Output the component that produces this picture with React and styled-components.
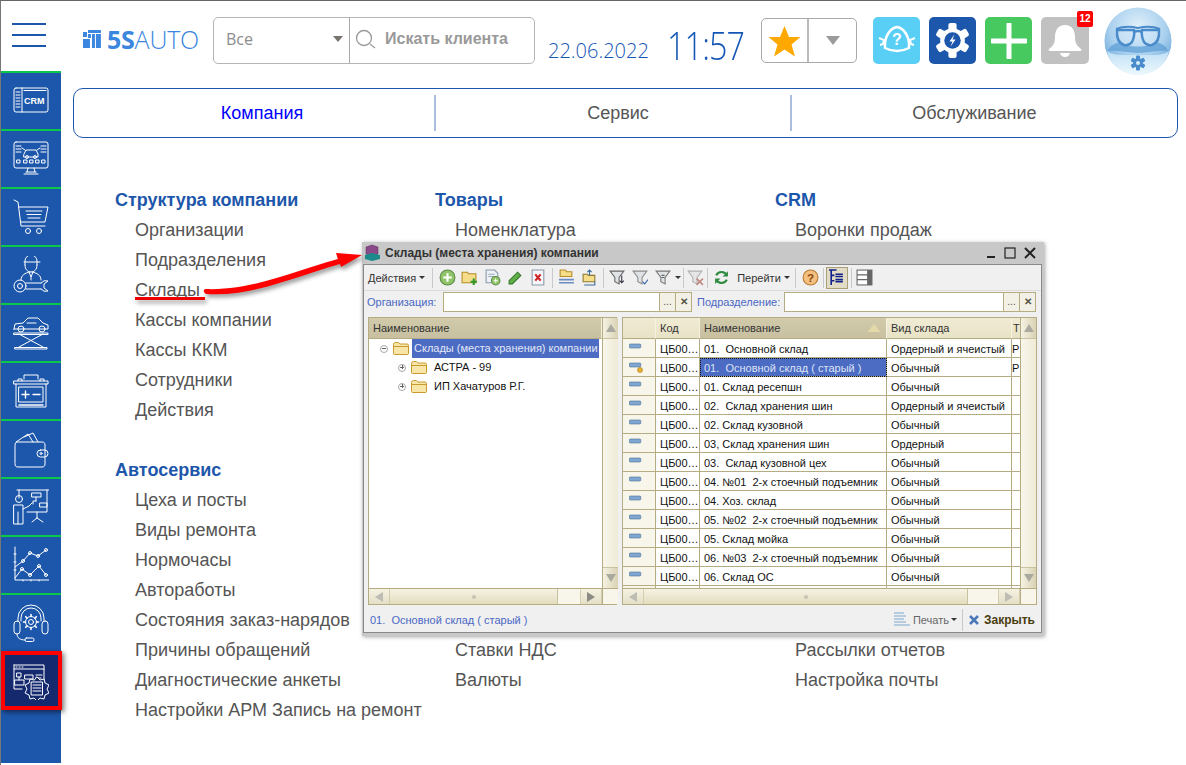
import React from 'react';
import styled, { createGlobalStyle } from 'styled-components';

const GlobalStyle = createGlobalStyle`
  html, body {
    margin: 0;
    padding: 0;
    background: #fff;
    font-family: "Liberation Sans", Arial, sans-serif;
  }
  * { box-sizing: border-box; }
`;

const BLUE = '#1d57ab';

const Page = styled.div`
  position: relative;
  width: 1186px;
  height: 765px;
  overflow: hidden;
  background: #fff;
  border-top: 1px solid #666;
  border-left: 1px solid #777;
`;

const Header = styled.header`
  display: flex;
  align-items: flex-start;
  height: 70px;
`;

const Burger = styled.div`
  display: flex;
  flex-direction: column;
  gap: 9px;
  width: 34px;
  margin: 22px 0 0 11px;
  span {
    display: block;
    height: 2px;
    background: ${BLUE};
  }
`;

const Logo = styled.div`
  display: flex;
  align-items: center;
  gap: 6px;
  margin: 26px 0 0 37px;
  width: 116px;
  height: 24px;
  font-size: 25px;
  line-height: 24px;
  letter-spacing: -0.2px;
  color: #3b86de;
  font-family: "Open Sans", "Liberation Sans", sans-serif;
  font-weight: 300;
  b { font-weight: 700; }
`;

const SearchBox = styled.div`
  display: flex;
  width: 322px;
  height: 47px;
  margin: 16px 0 0 14px;
  border: 1px solid #b5b5b5;
  border-radius: 5px;
`;

const ScopeSelect = styled.div`
  display: flex;
  align-items: center;
  justify-content: space-between;
  width: 136px;
  padding: 0 6px 3px 12px;
  border-right: 1px solid #aaa;
  font-family: "Open Sans", sans-serif;
  font-size: 16px;
  color: #8c8c8c;
`;

const Triangle = styled.i`
  display: block;
  width: 0;
  height: 0;
  border-left: ${p => p.$w || 6}px solid transparent;
  border-right: ${p => p.$w || 6}px solid transparent;
  border-top: ${p => p.$h || 7}px solid ${p => p.$c || '#77736d'};
`;

const SearchField = styled.div`
  display: flex;
  align-items: center;
  gap: 9px;
  padding: 0 0 3px 5px;
  font-size: 16px;
  font-weight: 700;
  color: #999;
`;

const DateText = styled.div`
  margin: 40px 0 0 13px;
  width: 119px;
  font-family: "Open Sans", sans-serif;
  font-weight: 300;
  font-size: 20px;
  line-height: 20px;
  color: #1456b5;
`;

const TimeText = styled.div`
  width: 94px;
  margin-top: 22px;
  font-family: "Open Sans", sans-serif;
  font-weight: 300;
  font-size: 38px;
  line-height: 44px;
  letter-spacing: -1px;
  color: #1456b5;
  transform: scaleX(.85);
  transform-origin: left center;
`;

const FavBox = styled.div`
  display: flex;
  width: 96px;
  height: 45px;
  margin-top: 17px;
  border: 1px solid #aaa;
  border-radius: 5px;
`;

const FavStar = styled.div`
  display: flex;
  align-items: center;
  justify-content: center;
  width: 47px;
  border-right: 2px solid #bbb;
`;

const FavArrow = styled.div`
  flex: 1;
  display: flex;
  align-items: center;
  justify-content: center;
`;

const ActionGroup = styled.div`
  display: flex;
  gap: 9px;
  margin: 16px 0 0 16px;
`;

const ActionButton = styled.div`
  position: relative;
  display: flex;
  align-items: center;
  justify-content: center;
  width: ${p => p.$w || 47}px;
  height: 47px;
  border-radius: 5px;
  background: ${p => p.$bg};
`;

const Badge = styled.span`
  position: absolute;
  top: -6px;
  right: -4px;
  width: 16px;
  height: 16px;
  border-radius: 2px;
  background: #f00;
  color: #fff;
  font-size: 10px;
  font-weight: 700;
  line-height: 16px;
  text-align: center;
`;

const Avatar = styled.div`
  width: 68px;
  height: 68px;
  margin: 6px 0 0 15px;
`;

const Body = styled.div`
  display: flex;
  height: 692px;
`;

const Sidebar = styled.nav`
  width: 60px;
  background: ${BLUE};
`;

const SideItem = styled.div`
  display: flex;
  align-items: center;
  justify-content: center;
  height: 58px;
  border-top: 2px solid #0bc74a;
  padding-right: 1px;
  ${p => p.$active && `
    position: relative;
    width: 61px;
    height: 59px;
    border: 4px solid #f00;
    background: #14296e;
    box-shadow: 2px 2px 5px rgba(0, 0, 0, .55);
  `}
`;

const Main = styled.main`
  flex: 1;
  padding-left: 12px;
`;

const Tabs = styled.div`
  display: flex;
  align-items: center;
  width: 1105px;
  height: 50px;
  margin-top: 17px;
  border: 1px solid ${BLUE};
  border-radius: 10px;
`;

const Tab = styled.div`
  width: ${p => p.$w}px;
  height: 36px;
  padding-left: ${p => p.$pl || 0}px;
  padding-right: ${p => p.$pr || 0}px;
  line-height: 36px;
  text-align: center;
  font-size: 18px;
  color: ${p => (p.$active ? '#0000ff' : '#555')};
  border-right: ${p => (p.$last ? 'none' : '2px solid #a9bfdc')};
`;

const Columns = styled.div`
  display: grid;
  grid-template-columns: 320px 340px 1fr;
  margin: 47px 0 0 42px;
`;

const Heading = styled.div`
  height: 30px;
  line-height: 30px;
  font-size: 18px;
  font-weight: 700;
  color: ${BLUE};
`;

const MenuLink = styled.div`
  height: 30px;
  line-height: 30px;
  padding-left: 20px;
  font-size: 18px;
  color: #555;
  white-space: nowrap;
`;

const Group = styled.section`
  margin-bottom: ${p => p.$gap || 0}px;
`;

const Window = styled.div`
  position: absolute;
  left: 361px;
  top: 241px;
  width: 682px;
  height: 394px;
  padding: 0 2px 3px 1px;
  background: #c8c8c8;
  box-shadow: 1px 1px 4px rgba(0, 0, 0, .35);
  font-family: "Liberation Sans", Arial, sans-serif;
  font-size: 11px;
  color: #111;
`;

const TitleBar = styled.div`
  display: flex;
  align-items: center;
  height: 22px;
  padding: 0 6px 0 1px;
  font-size: 12px;
  font-weight: 700;
  color: #333;
`;

const TitleText = styled.span`
  flex: 1;
  margin-left: 4px;
`;

const WinButtons = styled.div`
  display: flex;
  align-items: center;
  gap: 8px;
`;

const WinInner = styled.div`
  display: flex;
  flex-direction: column;
  height: 369px;
  background: #f0f0f0;
  border: 1px solid #8a8a8a;
`;

const Toolbar = styled.div`
  display: flex;
  align-items: center;
  height: 26px;
  padding-left: 4px;
  border-bottom: 1px solid #dcdcdc;
  color: #333;
`;

const ToolMenu = styled.span`
  display: flex;
  align-items: center;
  gap: 3px;
  margin-right: ${p => p.$mr || 0}px;
  margin-left: ${p => p.$ml || 0}px;
`;

const ToolSep = styled.i`
  display: block;
  width: 1px;
  height: 20px;
  margin: 0 ${p => p.$m || 4}px;
  background: #c9c9c9;
`;

const ToolIcon = styled.span`
  display: flex;
  align-items: center;
  justify-content: center;
  width: ${p => p.$w || 23}px;
  height: 22px;
  ${p => p.$active && 'background: #e2dcc6; border: 1px solid #a89f78;'}
`;

const FilterRow = styled.div`
  display: flex;
  align-items: center;
  height: 26px;
  padding: 0 0 4px 3px;
`;

const FilterLabel = styled.span`
  width: ${p => p.$w}px;
  color: #4a68c4;
  white-space: nowrap;
`;

const FilterInput = styled.div`
  width: ${p => p.$w}px;
  height: 20px;
  background: #fff;
  border: 1px solid #b5ac84;
`;

const FilterBtn = styled.div`
  width: 16px;
  height: 20px;
  margin-right: ${p => p.$mr || 0}px;
  border: 1px solid #b5ac84;
  border-left: none;
  background: #f3f1e6;
  text-align: center;
  font-size: 10px;
  line-height: 18px;
  font-weight: ${p => (p.$bold ? 700 : 400)};
  color: #554;
`;

const Panes = styled.div`
  display: flex;
  gap: 5px;
  padding-left: 4px;
  height: 288px;
`;

const Pane = styled.div`
  display: grid;
  grid-template-columns: 1fr 16px;
  grid-template-rows: 1fr 16px;
  width: ${p => p.$w}px;
  border: 1px solid #b5ac84;
  background: #fff;
`;

const PaneBody = styled.div`
  overflow: hidden;
  min-width: 0;
`;

const VScroll = styled.div`
  display: flex;
  flex-direction: column;
  justify-content: space-between;
  background: #f8f6ea;
  border-left: 1px solid #b5ac84;
`;

const ScrollBtn = styled.div`
  display: flex;
  align-items: center;
  justify-content: center;
  height: ${p => p.$h || 21}px;
  background: linear-gradient(90deg, #f5f2e2, #d9d2b4);
  border-${p => p.$side}: 1px solid #c9c2a0;
`;

const ThumbDot = styled.div`
  flex: 1;
  background: linear-gradient(90deg, #f8f6ea, #efebd8);
`;

const HScroll = styled.div`
  display: flex;
  background: #f8f6ea;
  border-top: 1px solid #b5ac84;
`;

const HArrow = styled.div`
  display: flex;
  align-items: center;
  justify-content: center;
  width: ${p => p.$w || 21}px;
  background: ${p => p.$plain ? 'transparent' : 'linear-gradient(180deg, #f5f2e2, #e4dfc6)'};
  border-right: 1px solid #d4cdae;
`;

const HThumb = styled.div`
  width: ${p => p.$w}px;
  display: flex;
  align-items: center;
  justify-content: center;
  background: linear-gradient(180deg, #f6f3e4, #e3dcbd);
  border-right: 1px solid #c9c2a0;
  &::after {
    content: '';
    width: 4px;
    height: 4px;
    border-radius: 50%;
    background: #c5c2b4;
  }
`;

const Corner = styled.div`
  border-top: 1px solid #b5ac84;
  border-left: 1px solid #b5ac84;
  background: #f8f6ea;
`;

const HeaderCell = styled.div`
  height: 21px;
  line-height: 20px;
  padding-left: ${p => p.$pl ?? 4}px;
  color: #333;
  white-space: nowrap;
  overflow: hidden;
  display: flex;
  align-items: center;
  justify-content: space-between;
  border-right: 1px solid #f6f2df;
  border-bottom: 1px solid #b5ac84;
  background: ${p => (p.$dark
    ? 'linear-gradient(180deg, #d2cbab, #c8c0a0)'
    : 'linear-gradient(180deg, #f0ebd4, #e8e2c6)')};
`;

const TreeRow = styled.div`
  display: flex;
  align-items: center;
  height: 19px;
  padding-left: ${p => p.$indent}px;
`;

const TreeToggle = styled.span`
  position: relative;
  display: block;
  width: 8px;
  height: 8px;
  margin-right: 5px;
  border: 1px solid #a8a8a8;
  border-radius: 50%;
  &::before {
    content: '';
    position: absolute;
    left: 1px;
    top: 2px;
    width: 4px;
    height: 1px;
    background: #666;
  }
  ${p => p.$plus && `&::after {
    content: '';
    position: absolute;
    left: 2.5px;
    top: 0.5px;
    width: 1px;
    height: 4px;
    background: #666;
  }`}
`;

const TreeLabel = styled.span`
  margin-left: ${p => p.$ml}px;
  height: 19px;
  line-height: 19px;
  white-space: nowrap;
  padding: 0 2px;
  ${p => p.$selected && 'background: #4c6cc4; color: #e3e8f6; width: 187px;'}
`;

const TableGrid = styled.div`
  display: grid;
  grid-template-columns: 33px 44px 187px 125px 9px;
  grid-template-rows: 21px;
  grid-auto-rows: 19px;
`;

const Cell = styled.div`
  height: 19px;
  line-height: 20px;
  padding-left: ${p => p.$pl ?? 4}px;
  border-right: 1px solid #b5ac84;
  border-bottom: 1px solid #b5ac84;
  white-space: pre;
  overflow: hidden;
  ${p => p.$selected && `
    background: #4c6cc4;
    color: #dde3f4;
    outline: 1px dotted #111;
    outline-offset: -1px;
  `}
`;

const MarkCell = styled(Cell)`
  display: flex;
  align-items: center;
  padding: 0 0 0 6px;
  background: #f8f6ea;
`;

const StatusBar = styled.div`
  flex: 1;
  display: flex;
  align-items: center;
  padding: 2px 6px 0 6px;
  color: #4a68c4;
`;

const StatusText = styled.span`
  flex: 1;
  white-space: pre;
`;

const PrintBtn = styled.span`
  display: flex;
  align-items: center;
  gap: 2px;
  color: #666;
  padding-right: 5px;
  margin-right: 5px;
  border-right: 1px solid #c9c9c9;
  height: 22px;
`;

const CloseBtn = styled.span`
  display: flex;
  align-items: center;
  gap: 4px;
  font-size: 12px;
  font-weight: 700;
  color: #4a3d10;
`;

const ArrowOverlay = styled.svg`
  position: absolute;
  left: 0;
  top: 0;
  width: 1186px;
  height: 765px;
  pointer-events: none;
  filter: drop-shadow(2px 3px 2px rgba(0, 0, 0, .4));
`;

const strokeProps = { fill: 'none', stroke: '#fff', strokeWidth: 1, strokeLinejoin: 'round', strokeLinecap: 'round' };

const SideIcon = ({ children }) => (
  <svg width="36" height="38" viewBox="0 0 36 38" {...strokeProps}>{children}</svg>
);

const sideIcons = [
  <SideIcon key="crm">
    <g transform="translate(0 4)">
      <rect x="1" y="2" width="34" height="24" rx="2" />
      <path d="M9 2v24M3 6h4M3 9h4M3 12h4M3 15h4M3 18h4M3 21h4M11 4.500h22" />
      <text x="11" y="18" fill="#fff" stroke="none" fontSize="9" fontFamily="Liberation Sans" fontWeight="700">CRM</text>
    </g>
  </SideIcon>,
  <SideIcon key="diag">
    <rect x="1" y="2" width="34" height="26" rx="2" />
    <path d="M13 32h10M11 34h14M15 28l-1 4M21 28l1 4M3 6h5M3 9h5M3 12h5M28 6h5M28 9h5M28 12h5" />
    <path d="M11 14l2-4h10l2 4v3H11zM9 8l3 2M27 8l-3 2" />
    <circle cx="14" cy="17" r="1.500" /><circle cx="22" cy="17" r="1.500" />
    <path d="M4 20h3v3H4zM11 20h3v3h-3zM17 20h3v3h-3zM23 20h3v3h-3zM29 20h3v3h-3z" />
  </SideIcon>,
  <SideIcon key="cart">
    <path d="M1 2l4 2 3 24h24" />
    <path d="M6 9h29l-3 15H8" />
    <path d="M13 13h16M14 16.500h14M15 20h12" />
    <circle cx="15" cy="33" r="2.500" /><circle cx="26" cy="33" r="2.500" />
  </SideIcon>,
  <SideIcon key="mech">
    <path d="M12 9V5a6 6 0 0 1 12 0v4M11 6h16M12 9c0 5 3 7 6 7s6-2 6-7" />
    <path d="M8 24c0-5 4-7 9-8M28 24c0-5-4-7-9-8M16 16l2 5 2-5M18 21v3" />
    <circle cx="7" cy="30" r="6" /><circle cx="7" cy="30" r="2.500" />
    <path d="M13 27h15M13 33h15M28 27a6 6 0 0 1 7-2l-4 3v4l4 3a6 6 0 0 1-7-2" />
  </SideIcon>,
  <SideIcon key="lift">
    <path d="M1 15l1-5 8-1 5-5h10l5 5 5 2v4H1z" />
    <circle cx="8" cy="15" r="3" /><circle cx="29" cy="15" r="3" />
    <path d="M14 9h9M1 19h34v1.500H1zM2 35h32v-1.500H2zM6 20l24 13M30 20L6 33" />
  </SideIcon>,
  <SideIcon key="bat">
    <path d="M1 9h34v3H1zM3 12v23h30V12M5 9V7h4v2M27 9V7h4v2M11 7V3h14v4" />
    <rect x="6" y="15" width="24" height="15" />
    <path d="M9 22.500h7M12.500 19v7M20 22.500h7M6 33h24" strokeWidth="1.400" />
  </SideIcon>,
  <SideIcon key="wallet">
    <path d="M2 15c0-2 1-3 3-3h24c2 0 3 1 3 3v19c0 2-1 3-3 3H5c-2 0-3-1-3-3z" />
    <path d="M3 12l12-8 5 8M11 7l9-4 5 9" />
    <rect x="24" y="20" width="11" height="7" rx="3.500" /><circle cx="28" cy="23.500" r="1" />
  </SideIcon>,
  <SideIcon key="board">
    <path d="M4 2h32M6 2v8M34 2v22H14" />
    <path d="M19 5h9v4h-9zM23 9v4M23 13h-3v3M27 15h7v4h-7zM24 24v6M24 30l-5 4M24 30l6 4" />
    <circle cx="6" cy="11" r="3.500" />
    <path d="M1 17h9v19H1zM5 24v12M10 21l6-3 3-3" />
  </SideIcon>,
  <SideIcon key="chart">
    <path d="M2 1v33h34M1 8h2M1 16h2M1 24h2M10 35v-1M18 35v-1M26 35v-1" />
    <path d="M2 21l8-6 7-8 8 3 8-6M2 32l7-9 8 6 9-9 7 9" />
    <circle cx="10" cy="15" r="1.500" /><circle cx="17" cy="7" r="1.500" /><circle cx="25" cy="10" r="1.500" /><circle cx="33" cy="4" r="1.500" />
    <circle cx="9" cy="23" r="1.500" /><circle cx="17" cy="29" r="1.500" /><circle cx="26" cy="20" r="1.500" /><circle cx="33" cy="29" r="1.500" />
  </SideIcon>,
  <SideIcon key="head">
    <path d="M5 17v-3a13 13 0 0 1 26 0v3M8 17v-3a10 10 0 0 1 20 0v3" />
    <rect x="1" y="17" width="6" height="13" rx="3" /><rect x="29" y="17" width="6" height="13" rx="3" />
    <path d="M4 30c0 4 3 6 8 6" /><rect x="12" y="34" width="9" height="3.500" rx="1.500" />
    <circle cx="18" cy="18" r="2.500" />
    <circle cx="18" cy="18" r="5.500" />
    <path d="M18 10.500v2M18 23.500v2M10.500 18h2M23.500 18h2M12.700 12.700l1.400 1.400M21.900 21.900l1.400 1.400M12.700 23.300l1.400-1.400M21.900 14.100l1.400-1.400" strokeWidth="1.600" />
  </SideIcon>,
  <SideIcon key="cfg">
    <path d="M1 3h30v24H15M1 3v24h8M1 7h30M3 5h1M6 5h1M9 5h1M4 11h4v4H4zM6 15v3M2 18h9v5H2zM12 13h8v4h-8zM23 13h6M23 16h5" />
    <path d="M24 15l3 3 4-1 1 4 4 2-2 4 2 4-4 2-1 4-4-1-3 3-3-3-4 1-1-4-4-2 2-4-2-4 4-2 1-4 4 1z" fill="#14296e" />
    <rect x="18.500" y="20" width="11" height="13" /><path d="M20 23h8M20 26h8M20 29h8" />
  </SideIcon>,
];

const Folder = () => (
  <svg width="16" height="13" viewBox="0 0 16 13">
    <path d="M.5 2.500q0-2 2-2h3l1.500 1.500h7q1.500 0 1.500 1.500v8q0 1-1 1h-13q-1 0-1-1z" fill="#f8e6a8" stroke="#c89a2e" />
    <path d="M.5 4.500h15" stroke="#c89a2e" />
  </svg>
);

const Mark = ({ dot }) => (
  <svg width="14" height="12" viewBox="0 0 14 12">
    <rect x=".3" y="2" width="11.500" height="4" rx="1" fill="#7fa7cf" stroke="#4a6f9a" strokeWidth=".6" />
    {dot && <circle cx="11" cy="9" r="2.500" fill="#e8b030" stroke="#a57a10" strokeWidth=".6" />}
  </svg>
);

const ti = { width: 17, height: 17, viewBox: '0 0 16 16' };
const FolderTool = ({ children }) => (
  <svg {...ti}>
    <path d="M1 3h5l1 1.500h7V13H1z" fill="#f6dd8a" stroke="#b58a24" />
    {children}
  </svg>
);
const FilterTool = ({ color = '#8a8a8a', children }) => (
  <svg {...ti}>
    <path d="M1 2h13L9.500 8v6l-4-2V8z" fill="#dfe3e6" stroke={color} />
    {children}
  </svg>
);

const Tools = () => (
  <Toolbar>
    <ToolMenu $mr={4}>Действия <Triangle $w={3} $h={3} $c="#333" /></ToolMenu>
    <ToolSep $m={3} />
    <ToolIcon $w={22}>
      <svg {...ti}><circle cx="8" cy="8" r="7" fill="#8fc46a" stroke="#5b8a45" /><path d="M8 4v8M4 8h8" stroke="#fff" strokeWidth="2" /></svg>
    </ToolIcon>
    <ToolIcon><FolderTool><path d="M12 9v6M9 12h6" stroke="#2e9a2e" strokeWidth="2" /></FolderTool></ToolIcon>
    <ToolIcon>
      <svg {...ti}><path d="M2 1h8l3 3v9H2z" fill="#eef2f6" stroke="#8a98a8" /><path d="M4 5h6M4 7h6" stroke="#9ab" /><circle cx="11" cy="11" r="4" fill="#8fc46a" stroke="#5b8a45" /><path d="M11 9v4M9 11h4" stroke="#fff" /></svg>
    </ToolIcon>
    <ToolIcon>
      <svg {...ti}><path d="M2 11l8-8 3 3-8 8H2z" fill="#62b04a" stroke="#35782a" /></svg>
    </ToolIcon>
    <ToolIcon>
      <svg {...ti}><path d="M2 1h11v14H2z" fill="#f6f8fb" stroke="#8a98a8" /><path d="M5 5l5 6M10 5l-5 6" stroke="#d02020" strokeWidth="2" /></svg>
    </ToolIcon>
    <ToolSep $m={2} />
    <ToolIcon>
      <svg {...ti}><path d="M2 1h5l1 1.500h5V7H2z" fill="#f6dd8a" stroke="#b58a24" /><path d="M1 10h14M1 13h14" stroke="#6b8cc0" strokeWidth="1.500" /></svg>
    </ToolIcon>
    <ToolIcon>
      <svg {...ti}><path d="M2 5h4l1 1h6v6H2z" fill="#f6dd8a" stroke="#8a7a30" /><path d="M8 1v5M6 3l2-2 2 2M13 12v3H3" fill="none" stroke="#3a6a9a" /></svg>
    </ToolIcon>
    <ToolSep $m={2} />
    <ToolIcon><FilterTool color="#666"><path d="M12 6v7M10 11l2 2 2-2" stroke="#334" fill="none" /></FilterTool></ToolIcon>
    <ToolIcon><FilterTool><path d="M10 12l2 2 3-4" stroke="#3a6ab0" fill="none" /></FilterTool></ToolIcon>
    <ToolIcon $w={23}><FilterTool color="#777"><path d="M6 6h3M6 8h3" stroke="#666" /></FilterTool></ToolIcon>
    <Triangle $w={3} $h={3} $c="#333" />
    <ToolSep $m={2} />
    <ToolIcon $w={18}>
      <svg {...ti}><path d="M1 2h13L9.500 8v6l-4-2V8z" fill="#e6e6e6" stroke="#b0b0b0" /><path d="M9 9l6 6M15 9l-6 6" stroke="#c08a80" strokeWidth="1.500" /></svg>
    </ToolIcon>
    <ToolSep $m={3} />
    <ToolIcon $w={20}>
      <svg {...ti}><path d="M3 6a5.500 5.500 0 0 1 10 0M13 10a5.500 5.500 0 0 1-10 0" fill="none" stroke="#2e8a3e" strokeWidth="2" /><path d="M14 2v5H9zM2 14V9h5z" fill="#2e8a3e" /></svg>
    </ToolIcon>
    <ToolMenu $ml={6} $mr={1}>Перейти <Triangle $w={3} $h={3} $c="#333" /></ToolMenu>
    <ToolSep $m={4} />
    <ToolIcon $w={21}>
      <svg width="17" height="17" viewBox="0 0 16 16"><circle cx="8" cy="8" r="7" fill="#f3c080" stroke="#b87a30" /><text x="8" y="12" textAnchor="middle" fontSize="11" fontWeight="700" fill="#8a4a10" fontFamily="Liberation Sans">?</text></svg>
    </ToolIcon>
    <ToolSep $m={2} />
    <ToolIcon $active $w={22}>
      <svg {...ti}><path d="M1 1h7M3 1v14M3 6h3M3 11h3" stroke="#10208a" fill="none" strokeWidth="1.500" /><path d="M7 5h7M7 7h7M7 10h7M7 12h7" stroke="#10208a" strokeWidth="1.500" /></svg>
    </ToolIcon>
    <ToolSep $m={3} />
    <ToolIcon $w={20}>
      <svg {...ti}><rect x="1" y="1" width="14" height="14" fill="#fff" stroke="#666" /><path d="M1 5.500h14M1 10h14M11 1v14" stroke="#666" /><path d="M11 1h4v14h-4z" fill="#666" /></svg>
    </ToolIcon>
  </Toolbar>
);

const UpArrow = styled(Triangle)`
  transform: rotate(180deg);
`;

const SideArrow = styled(Triangle)`
  transform: rotate(${p => (p.$right ? -90 : 90)}deg);
`;

const VBar = () => (
  <VScroll>
    <ScrollBtn $side="bottom"><UpArrow $w={5} $h={8} $c="#a9a9a0" /></ScrollBtn>
    <ThumbDot />
    <ScrollBtn $side="top"><Triangle $w={5} $h={8} $c="#a9a9a0" /></ScrollBtn>
  </VScroll>
);

const rows = [
  ['01.  Основной склад', 'Ордерный и ячеистый', 'Р'],
  ['01.  Основной склад ( старый )', 'Обычный', 'Р'],
  ['01. Склад ресепшн', 'Обычный'],
  ['02.  Склад хранения шин', 'Ордерный и ячеистый'],
  ['02. Склад кузовной', 'Обычный'],
  ['03, Склад хранения шин', 'Ордерный'],
  ['03.  Склад кузовной цех', 'Обычный'],
  ['04. №01  2-х стоечный подъемник', 'Обычный'],
  ['04. Хоз. склад', 'Обычный'],
  ['05. №02  2-х стоечный подъемник', 'Обычный'],
  ['05. Склад мойка', 'Обычный'],
  ['06. №03  2-х стоечный подъемник', 'Обычный'],
  ['06. Склад ОС', 'Обычный'],
];

const WarehouseWindow = () => (
  <Window>
    <TitleBar>
      <svg width="17" height="18" viewBox="0 0 17 18">
        <path d="M2 3l6-2 6 2v7l-6 2-6-2z" fill="#8a4a8a" stroke="#5a2a5a" strokeWidth=".5" />
        <path d="M1 11l7-2 8 2v4l-8 2-7-2z" fill="#1c8a8a" />
      </svg>
      <TitleText>Склады (места хранения) компании</TitleText>
      <WinButtons>
        <svg width="10" height="12" viewBox="0 0 10 12"><path d="M1 10h8" stroke="#222" strokeWidth="2" /></svg>
        <svg width="12" height="12" viewBox="0 0 12 12"><rect x="1" y="1" width="10" height="10" fill="none" stroke="#222" strokeWidth="1.200" /></svg>
        <svg width="12" height="12" viewBox="0 0 12 12"><path d="M1 1l10 10M11 1L1 11" stroke="#222" strokeWidth="2" /></svg>
      </WinButtons>
    </TitleBar>
    <WinInner>
      <Tools />
      <FilterRow>
        <FilterLabel $w={76}>Организация:</FilterLabel>
        <FilterInput $w={217} />
        <FilterBtn>...</FilterBtn>
        <FilterBtn $bold $mr={5}>✕</FilterBtn>
        <FilterLabel $w={87}>Подразделение:</FilterLabel>
        <FilterInput $w={220} />
        <FilterBtn>...</FilterBtn>
        <FilterBtn $bold>✕</FilterBtn>
      </FilterRow>
      <Panes>
        <Pane $w={249}>
          <PaneBody>
            <HeaderCell $dark>Наименование</HeaderCell>
            <TreeRow $indent={11}>
              <TreeToggle />
              <Folder />
              <TreeLabel $ml={3} $selected>Склады (места хранения) компании</TreeLabel>
            </TreeRow>
            <TreeRow $indent={29}>
              <TreeToggle $plus />
              <Folder />
              <TreeLabel $ml={5}>АСТРА - 99</TreeLabel>
            </TreeRow>
            <TreeRow $indent={29}>
              <TreeToggle $plus />
              <Folder />
              <TreeLabel $ml={5}>ИП Хачатуров Р.Г.</TreeLabel>
            </TreeRow>
          </PaneBody>
          <VBar />
          <HScroll>
            <HArrow><SideArrow $w={5} $h={8} $c="#bdbdb4" /></HArrow>
            <HThumb $w={168} />
            <HArrow $plain $w={23} />
            <HArrow><SideArrow $right $w={5} $h={8} $c="#8b8b84" /></HArrow>
          </HScroll>
          <Corner />
        </Pane>
        <Pane $w={415}>
          <PaneBody>
            <TableGrid>
              <HeaderCell />
              <HeaderCell>Код</HeaderCell>
              <HeaderCell $dark>
                Наименование
                <svg width="24" height="8" viewBox="0 0 14 6"><path d="M7 0l5 6H2z" fill="#e3d9a8" /></svg>
              </HeaderCell>
              <HeaderCell>Вид склада</HeaderCell>
              <HeaderCell $pl={1}>Т</HeaderCell>
              {rows.map(([name, kind, extra], i) => (
                <React.Fragment key={name}>
                  <MarkCell><Mark dot={i === 1} /></MarkCell>
                  <Cell>ЦБ00…</Cell>
                  <Cell $selected={i === 1}>{name}</Cell>
                  <Cell>{kind}</Cell>
                  <Cell $pl={0}>{extra}</Cell>
                </React.Fragment>
              ))}
              <MarkCell /><Cell /><Cell /><Cell /><Cell />
            </TableGrid>
          </PaneBody>
          <VBar />
          <HScroll>
            <HArrow><SideArrow $w={5} $h={8} $c="#bdbdb4" /></HArrow>
            <HThumb $w={324} />
            <HArrow $plain $w={31} />
            <HArrow><SideArrow $right $w={5} $h={8} $c="#bdbdb4" /></HArrow>
          </HScroll>
          <Corner />
        </Pane>
      </Panes>
      <StatusBar>
        <StatusText>01.  Основной склад ( старый )</StatusText>
        <PrintBtn>
          <svg width="18" height="16" viewBox="0 0 18 16"><path d="M1 1h10M1 4h12M1 7h10M1 10h12M1 13h16" stroke="#7fa7cf" /></svg>
          Печать <Triangle $w={3} $h={3} $c="#333" />
        </PrintBtn>
        <CloseBtn>
          <svg width="12" height="12" viewBox="0 0 12 12"><path d="M2 2l8 8M10 2l-8 8" stroke="#4a78b8" strokeWidth="2.500" /></svg>
          Закрыть
        </CloseBtn>
      </StatusBar>
    </WinInner>
  </Window>
);

const GearBolt = () => (
  <svg width="37" height="37" viewBox="0 0 36 36">
    <g fill="#fff">
      <circle cx="18" cy="18" r="12" />
      {[0, 60, 120, 180, 240, 300].map(a => (
        <rect key={a} x="14" y="1" width="8" height="8" rx="2" transform={`rotate(${a} 18 18)`} />
      ))}
    </g>
    <circle cx="18" cy="18" r="8" fill={BLUE} />
    <path d="M20 12l-5 7h3l-2 5 5-7h-3z" fill="#fff" />
  </svg>
);

const AvatarImage = () => (
  <svg width="68" height="68" viewBox="0 0 68 68">
    <defs>
      <radialGradient id="face" cx="50%" cy="30%" r="70%">
        <stop offset="0" stopColor="#e3f1fb" />
        <stop offset=".6" stopColor="#a9d0ee" />
        <stop offset="1" stopColor="#62a2d8" />
      </radialGradient>
      <linearGradient id="chin" x1="0" y1="0" x2="0" y2="1">
        <stop offset="0" stopColor="#bfe0f6" />
        <stop offset="1" stopColor="#eef8fd" />
      </linearGradient>
    </defs>
    <circle cx="34" cy="34" r="33.500" fill="url(#face)" />
    <path d="M3 44c6 5 19 4 31 4s25 1 31-4c-3 14-16 24-31 24S6 58 3 44z" fill="url(#chin)" />
    <path d="M4 44c2-6 8-8 12-9 5 6 31 6 36 0 4 1 10 3 12 9-8-1-20 2-30 2S12 43 4 44z" fill="#5f9fd6" opacity=".75" />
    <path d="M12 22q10-4 22-1q12-3 22 1" fill="none" stroke="#4a8ccb" strokeWidth="2" />
    <path d="M13 23h17q1 6-2 12-3 4-8 3-8-3-7-15zM55 23H38q-1 6 2 12 3 4 8 3 8-3 7-15z" fill="#cfe6f7" fillOpacity=".5" stroke="#4a8ccb" strokeWidth="2.500" />
    <path d="M30 25q4-2 8 0" fill="none" stroke="#4a8ccb" strokeWidth="2.500" />
    <g fill="#4a8ccb">
      <circle cx="34" cy="56" r="5" />
      {[0, 60, 120, 180, 240, 300].map(a => (
        <rect key={a} x="32" y="48.500" width="4" height="4" rx="1" transform={`rotate(${a} 34 56)`} />
      ))}
    </g>
    <circle cx="34" cy="56" r="2" fill="#d8ecf9" />
  </svg>
);

const App = () => (
  <Page>
    <GlobalStyle />
    <Header>
      <Burger><span /><span /><span /></Burger>
      <Logo>
        <svg width="18" height="18" viewBox="0 0 18 18" fill="#3b86de">
          <path d="M0 2h4v5H0zM0 9h7v9H0zM5 0h13v3H5zM5 4h3v4H5zM9 4h3v14H9zM13 4h5v14h-5z" />
        </svg>
        <span><b>5S</b>AUTO</span>
      </Logo>
      <SearchBox>
        <ScopeSelect>Все <Triangle $w={5} $h={6} /></ScopeSelect>
        <SearchField>
          <svg width="21" height="21" viewBox="0 0 21 21" fill="none" stroke="#999" strokeWidth="1.300">
            <circle cx="9" cy="9" r="7.500" /><path d="M15 15l5 4" />
          </svg>
          Искать клиента
        </SearchField>
      </SearchBox>
      <DateText>22.06.2022</DateText>
      <TimeText>11:57</TimeText>
      <FavBox>
        <FavStar>
          <svg width="33" height="32" viewBox="0 0 33 32"><path d="M16.500 1l4.500 11h11.500l-9 7.500 3.500 12-10.500-7-10.500 7 3.500-12-9-7.500H12z" fill="#ffa800" /></svg>
        </FavStar>
        <FavArrow><Triangle $w={7} $h={9} $c="#9b9b9b" /></FavArrow>
      </FavBox>
      <ActionGroup>
        <ActionButton $bg="#59cff5">
          <svg width="38" height="34" viewBox="0 0 38 34" fill="none" stroke="#fff" strokeWidth="2.500">
            <path d="M7 24C6 13 12 4 19 3c7 1 13 10 12 21-8 4-16 4-24 0z" />
            <path d="M1 14l5 2-1 4-3 1M37 14l-5 2 1 4 3 1" strokeWidth="2" />
            <text x="19" y="21" textAnchor="middle" fill="#fff" stroke="none" fontSize="16" fontWeight="700" fontFamily="Liberation Sans">?</text>
          </svg>
        </ActionButton>
        <ActionButton $bg={BLUE}><GearBolt /></ActionButton>
        <ActionButton $bg="#47c95f">
          <svg width="36" height="36" viewBox="0 0 36 36"><path d="M18 1v34M1 18h34" stroke="#fff" strokeWidth="5" strokeLinecap="round" /></svg>
        </ActionButton>
        <ActionButton $bg="#c1c1c1" $w={48}>
          <svg width="34" height="36" viewBox="0 0 34 36" fill="#fff">
            <path d="M17 2c7 0 10 5 10 12 0 6 2 9 6 12 1 1 0 2-1 2H2c-1 0-2-1-1-2 4-3 6-6 6-12C7 7 10 2 17 2z" />
            <path d="M12 30h10c-1 3-3 4-5 4s-4-1-5-4z" />
          </svg>
          <Badge>12</Badge>
        </ActionButton>
      </ActionGroup>
      <Avatar><AvatarImage /></Avatar>
    </Header>
    <Body>
      <Sidebar>
        {sideIcons.map((icon, i) => (
          <SideItem key={i} $active={i === 10}>{icon}</SideItem>
        ))}
      </Sidebar>
      <Main>
        <Tabs>
          <Tab $w={362} $pl={16} $active>Компания</Tab>
          <Tab $w={356} $pl={10}>Сервис</Tab>
          <Tab $w={385} $pr={20} $last>Обслуживание</Tab>
        </Tabs>
        <Columns>
          <div>
            <Group $gap={30}>
              <Heading>Структура компании</Heading>
              {['Организации', 'Подразделения', 'Склады', 'Кассы компании', 'Кассы ККМ', 'Сотрудники', 'Действия'].map(t => (
                <MenuLink key={t}>{t}</MenuLink>
              ))}
            </Group>
            <Group>
              <Heading>Автосервис</Heading>
              {['Цеха и посты', 'Виды ремонта', 'Нормочасы', 'Автоработы', 'Состояния заказ-нарядов', 'Причины обращений', 'Диагностические анкеты', 'Настройки АРМ Запись на ремонт'].map(t => (
                <MenuLink key={t}>{t}</MenuLink>
              ))}
            </Group>
          </div>
          <div>
            <Group $gap={390}>
              <Heading>Товары</Heading>
              <MenuLink>Номенклатура</MenuLink>
            </Group>
            <MenuLink>Ставки НДС</MenuLink>
            <MenuLink>Валюты</MenuLink>
          </div>
          <div>
            <Group $gap={390}>
              <Heading>CRM</Heading>
              <MenuLink>Воронки продаж</MenuLink>
            </Group>
            <MenuLink>Рассылки отчетов</MenuLink>
            <MenuLink>Настройка почты</MenuLink>
          </div>
        </Columns>
      </Main>
    </Body>
    <WarehouseWindow />
    <ArrowOverlay viewBox="0 0 1186 765">
      <path d="M204 288C250 290 290 271 337 258L335 252 361 254 340 266 339 263C290 277 250 296 205 293Q201 290 204 288Z" fill="#f00" />
      <path d="M134 297.500h70" stroke="#e00" strokeWidth="3" />
    </ArrowOverlay>
  </Page>
);

export default App;
